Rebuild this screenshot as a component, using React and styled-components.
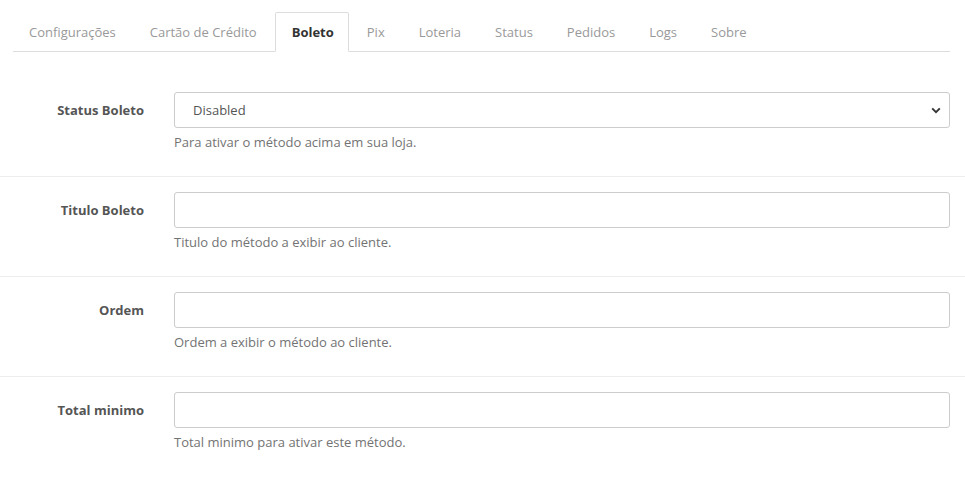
import React from "react";
import styled, { createGlobalStyle, css } from "styled-components";

const GlobalStyle = createGlobalStyle`
  html, body {
    margin: 0;
    padding: 0;
    background: #fff;
  }
  body {
    font-family: "Open Sans", "Liberation Sans", sans-serif;
    font-size: 13px;
    line-height: 18px;
    color: #666;
  }
  * { box-sizing: border-box; }
`;

const tabs = [
  "Configurações",
  "Cartão de Crédito",
  "Boleto",
  "Pix",
  "Loteria",
  "Status",
  "Pedidos",
  "Logs",
  "Sobre",
];

const fields = [
  { label: "Status Boleto", help: "Para ativar o método acima em sua loja.", select: true },
  { label: "Titulo Boleto", help: "Titulo do método a exibir ao cliente." },
  { label: "Ordem", help: "Ordem a exibir o método ao cliente." },
  { label: "Total minimo", help: "Total minimo para ativar este método." },
];

function Chevron() {
  return (
    <svg width="10" height="7" viewBox="0 0 10 7">
      <path d="M1.2 1.4 L5 5.2 L8.8 1.4" fill="none" stroke="#333" strokeWidth="1.9" />
    </svg>
  );
}

export default function App() {
  return (
    <Page>
      <GlobalStyle />
      <Tabs>
        {tabs.map((t) => (
          <Tab key={t} active={t === "Boleto"}>
            {t}
          </Tab>
        ))}
      </Tabs>

      <Form>
        {fields.map((f, i) => (
          <Row key={f.label} first={i === 0}>
            <Label>{f.label}</Label>
            <Control>
              {f.select ? (
                <SelectBox>
                  <span>Disabled</span>
                  <Chevron />
                </SelectBox>
              ) : (
                <Input type="text" />
              )}
              <Help>{f.help}</Help>
            </Control>
          </Row>
        ))}
      </Form>
    </Page>
  );
}

const Page = styled.div`
  width: 965px;
  padding-top: 12px;
`;

const Tabs = styled.ul`
  list-style: none;
  display: flex;
  margin: 0 15px 25px 13px;
  padding: 0;
  border-bottom: 1px solid #ddd;
`;

const Tab = styled.li`
  margin-right: 2px;
  margin-bottom: -1px;
  padding: 10px 15px;
  border: 1px solid transparent;
  border-radius: 2px 2px 0 0;
  color: #999;
  cursor: pointer;

  ${(props) =>
    props.active &&
    css`
      border-color: #ddd #ddd transparent;
      background: #fff;
      color: #333;
      font-weight: 700;
      padding-left: 16px;
      padding-right: 14px;
    `}
`;

const Form = styled.div``;

const Row = styled.div`
  display: grid;
  grid-template-columns: 131px 776px;
  column-gap: 30px;
  padding: 15px 13px;
  border-top: 1px solid #ededed;

  ${(props) => props.first && `border-top: 1px solid transparent; margin-top: -1px;`}
`;

const Label = styled.label`
  text-align: right;
  padding-top: 9px;
  font-weight: 700;
  color: #555;
`;

const Control = styled.div`
  display: flex;
  flex-direction: column;
`;

const fieldBox = css`
  width: 100%;
  height: 36px;
  border: 1px solid #ccc;
  border-radius: 3px;
  background: #fff;
  font-family: inherit;
  font-size: 13px;
  color: #555;
`;

const SelectBox = styled.div`
  ${fieldBox}
  display: flex;
  align-items: center;
  justify-content: space-between;
  padding: 0 8px 0 18px;
`;

const Input = styled.input`
  ${fieldBox}
  padding: 6px 12px;
  outline: none;
`;

const Help = styled.p`
  margin: 5px 0 10px;
  color: #737373;
`;
